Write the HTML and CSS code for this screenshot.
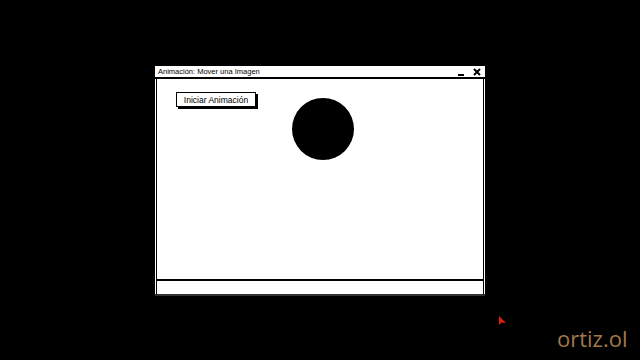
FILE: index.html
```html
<!DOCTYPE html>
<html lang="es">
<head>
    <meta charset="UTF-8">
    <meta name="viewport" content="width=device-width, initial-scale=1.0">
    <title>Animación</title>
    <link rel="stylesheet" href="styles.css">
</head>
<body>
    <div class="window">
        <div class="title-bar">
            <span class="title">Animación: Mover una Imagen</span>
            <span class="controls">
                <span class="minimize"></span>
                <svg class="close" width="8" height="8" viewBox="0 0 8 8">
                    <path d="M1 1 L7 7 M7 1 L1 7" stroke="#000" stroke-width="2"/>
                </svg>
            </span>
        </div>
        <div class="content">
            <div class="toolbar">
                <button class="start-btn">Iniciar Animación</button>
            </div>
            <div class="ball"></div>
        </div>
        <div class="status-bar"></div>
    </div>

    <svg class="cursor" width="8" height="10" viewBox="0 0 8 10">
        <path d="M0 0 L0 9 L2.5 6.5 L7 7 Z" fill="#e02010"/>
    </svg>
    <div class="watermark">ortiz.ol</div>
</body>
</html>
```

FILE: styles.css
```css
body {
    display: flex;
    justify-content: center;
    align-items: center;
    height: 360px;
    margin: 0;
    background-color: #000;
    font-family: "Liberation Sans", Arial, sans-serif;
    overflow: hidden;
}

.window {
    width: 330px;
    height: 230px;
    margin-top: 2px;
    background-color: #fff;
    display: flex;
    flex-direction: column;
    box-sizing: border-box;
    border-bottom: 2px solid #333;
}

.title-bar {
    height: 11px;
    display: flex;
    align-items: center;
    justify-content: space-between;
    padding: 0 3px 0 3px;
    border-bottom: 2px solid #000;
}

.title {
    font-size: 7.5px;
    color: #000;
    line-height: 11px;
}

.controls {
    display: flex;
    align-items: center;
    gap: 9px;
}

.minimize {
    width: 6px;
    height: 2px;
    margin-top: 6px;
    background-color: #000;
}

.close {
    display: block;
    margin-right: 1px;
}

.content {
    flex: 1;
    position: relative;
    margin: 0 1px;
    border-left: 1px solid #000;
    border-right: 1px solid #000;
    border-bottom: 2px solid #000;
}

.toolbar {
    padding: 13px 0 0 19px;
}

.start-btn {
    display: block;
    width: 80px;
    height: 15px;
    padding: 0;
    background-color: #fff;
    border: 1px solid #000;
    box-shadow: 2px 2px 0 #000;
    font-family: "Liberation Sans", Arial, sans-serif;
    font-size: 8.5px;
    color: #000;
}

.ball {
    position: absolute;
    left: 135px;
    top: 19px;
    width: 62px;
    height: 62px;
    border-radius: 50%;
    background-color: #000;
}

.status-bar {
    height: 13px;
    margin: 0 1px;
    border-left: 1px solid #000;
    border-right: 1px solid #000;
}

.cursor {
    position: absolute;
    left: 499px;
    top: 316px;
}

.watermark {
    position: absolute;
    left: 557px;
    top: 323px;
    font-family: "Open Sans", sans-serif;
    font-size: 22px;
    color: #a0784c;
}
```
